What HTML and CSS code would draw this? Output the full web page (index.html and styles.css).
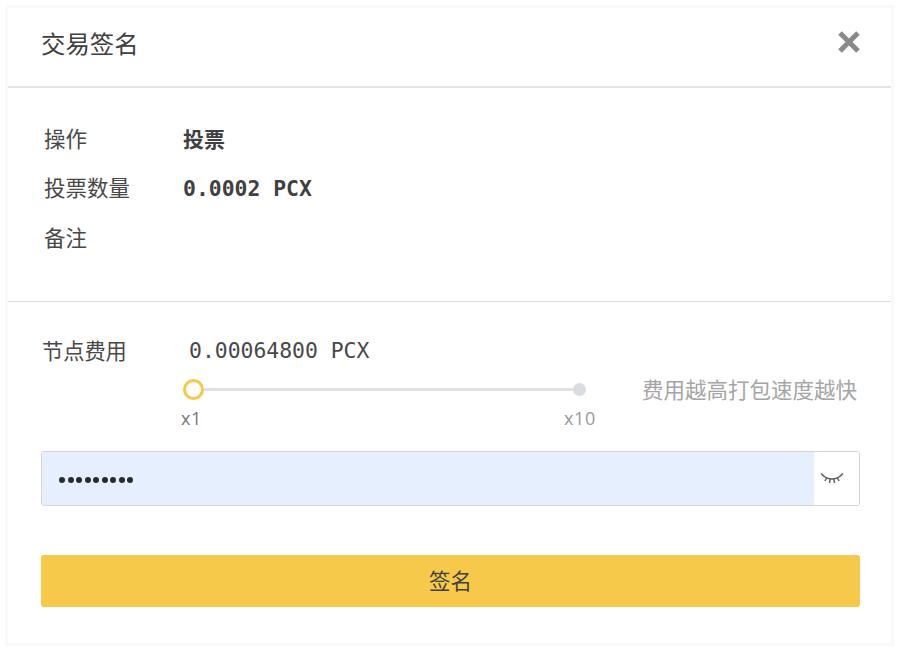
FILE: index.html
```html
<!DOCTYPE html>
<html lang="zh-CN">
<head>
    <meta charset="UTF-8">
    <meta name="viewport" content="width=device-width, initial-scale=1.0">
    <title>交易签名</title>
    <link rel="stylesheet" href="styles.css">
</head>
<body>
    <div class="modal">
        <div class="modal-header">
            <h1>交易签名</h1>
            <svg class="close-icon" width="24" height="24" viewBox="0 0 24 24">
                <path d="M3 3 L21 21 M21 3 L3 21" />
            </svg>
        </div>

        <div class="info">
            <div class="info-row">
                <span class="info-label">操作</span>
                <span class="info-value">投票</span>
            </div>
            <div class="info-row">
                <span class="info-label">投票数量</span>
                <span class="info-value mono">0.0002 PCX</span>
            </div>
            <div class="info-row">
                <span class="info-label">备注</span>
            </div>
        </div>

        <div class="form">
            <div class="fee-row">
                <span class="fee-label">节点费用</span>
                <div class="fee-body">
                    <div class="fee-amount">0.00064800 PCX</div>
                    <div class="slider-row">
                        <div class="slider">
                            <div class="slider-track">
                                <span class="thumb"></span>
                                <span class="track-line"></span>
                                <span class="track-end"></span>
                            </div>
                            <div class="slider-marks">
                                <span>x1</span>
                                <span>x10</span>
                            </div>
                        </div>
                        <span class="fee-hint">费用越高打包速度越快</span>
                    </div>
                </div>
            </div>

            <div class="password">
                <div class="password-input">
                    <span class="dot"></span><span class="dot"></span><span class="dot"></span>
                    <span class="dot"></span><span class="dot"></span><span class="dot"></span>
                    <span class="dot"></span><span class="dot"></span><span class="dot"></span>
                </div>
                <div class="password-eye">
                    <svg width="24" height="14" viewBox="0 0 24 14">
                        <path d="M2 3 Q12 11 22 3 M1 1.5 L4.5 4.5 M23 1.5 L19.5 4.5 M6.5 6 L5 9 M17.5 6 L19 9 M10 7.5 L9.5 11 M14 7.5 L14.5 11" />
                    </svg>
                </div>
            </div>

            <button class="submit">签名</button>
        </div>
    </div>
</body>
</html>
```

FILE: styles.css
```css
html, body {
    height: 100%;
}
body {
    margin: 0;
    padding: 8px 9px 8px 8px;
    box-sizing: border-box;
    background: #ffffff;
    font-family: "Noto Sans CJK SC", "Noto Sans", sans-serif;
    color: #404040;
    overflow: hidden;
}
.modal {
    height: 635px;
    box-shadow: 0 0 0 3px #f9f9f9;
    background: #ffffff;
}
.modal-header {
    height: 78px;
    display: flex;
    justify-content: space-between;
    padding: 0 30px 0 33px;
    border-bottom: 2px solid #e4e4e4;
}
h1 {
    margin: 0;
    font-size: 24.4px;
    font-weight: 400;
    line-height: 70px;
    color: #404040;
}
.close-icon {
    margin-top: 22px;
}
.close-icon path {
    stroke: #8a8a8a;
    stroke-width: 5;
    fill: none;
}
.info {
    height: 214px;
    box-sizing: border-box;
    padding: 26px 36px 0;
    border-bottom: 1px solid #dcdcdc;
}
.info-row {
    display: flex;
    align-items: center;
    height: 49.5px;
}
.info-label {
    width: 139px;
    font-size: 21.5px;
    line-height: 32px;
    margin-top: -2px;
    color: #484848;
}
.info-value {
    font-size: 21px;
    font-weight: 700;
    line-height: 32px;
    margin-top: -2px;
    color: #404040;
}
.mono {
    font-family: "DejaVu Sans Mono", monospace;
    font-size: 21.4px;
    font-weight: 700;
    margin-top: 2px;
}
.form {
    padding: 30px 31px 0 33px;
}
.fee-row {
    display: flex;
}
.fee-label {
    width: 147px;
    padding-left: 1px;
    box-sizing: border-box;
    font-size: 21.2px;
    line-height: 35px;
    color: #484848;
}
.fee-body {
    flex: 1;
}
.fee-amount {
    font-family: "DejaVu Sans Mono", monospace;
    font-size: 21.4px;
    line-height: 38px;
    margin-left: 1px;
    color: #484848;
}
.slider-row {
    display: flex;
    justify-content: space-between;
    margin-top: 8px;
    margin-left: -8px;
    padding-right: 3px;
}
.slider {
    width: 416px;
}
.slider-track {
    display: flex;
    align-items: center;
    height: 22px;
    margin: 0 10px 0 3px;
}
.thumb {
    width: 21px;
    height: 21px;
    box-sizing: border-box;
    border: 3px solid #f6c94a;
    border-radius: 50%;
    background: #ffffff;
}
.track-line {
    flex: 1;
    height: 3px;
    background: #dfe1e4;
}
.track-end {
    width: 13px;
    height: 13px;
    border-radius: 50%;
    background: #d9dde2;
}
.slider-marks {
    display: flex;
    justify-content: space-between;
    margin-top: 6px;
    padding-left: 1px;
    font-family: "Open Sans", sans-serif;
    font-size: 18px;
    letter-spacing: 0.7px;
    line-height: 24px;
    color: #777777;
}
.slider-marks span:last-child {
    color: #999999;
}
.fee-hint {
    font-size: 21.5px;
    line-height: 22px;
    color: #a5a5a5;
}
.password {
    display: flex;
    height: 55px;
    box-sizing: border-box;
    margin-top: 21px;
    border: 1px solid #d4d4d4;
    border-radius: 3px;
    overflow: hidden;
}
.password-input {
    flex: 1;
    display: flex;
    align-items: center;
    gap: 2.5px;
    padding: 3px 0 0 17px;
    background: #e5effd;
}
.dot {
    width: 6px;
    height: 6px;
    border-radius: 50%;
    background: #2b2b2b;
}
.password-eye {
    width: 45px;
    box-sizing: border-box;
    padding-right: 9px;
    display: flex;
    align-items: center;
    justify-content: center;
    background: #ffffff;
}
.password-eye path {
    stroke: #666666;
    stroke-width: 1.6;
    fill: none;
}
.submit {
    display: block;
    width: 100%;
    height: 52px;
    margin-top: 49px;
    padding: 0 0 4px;
    border: none;
    border-radius: 3px;
    background: #f6c94a;
    font-family: "Noto Sans CJK SC", sans-serif;
    font-size: 21.5px;
    color: #404040;
}
```
